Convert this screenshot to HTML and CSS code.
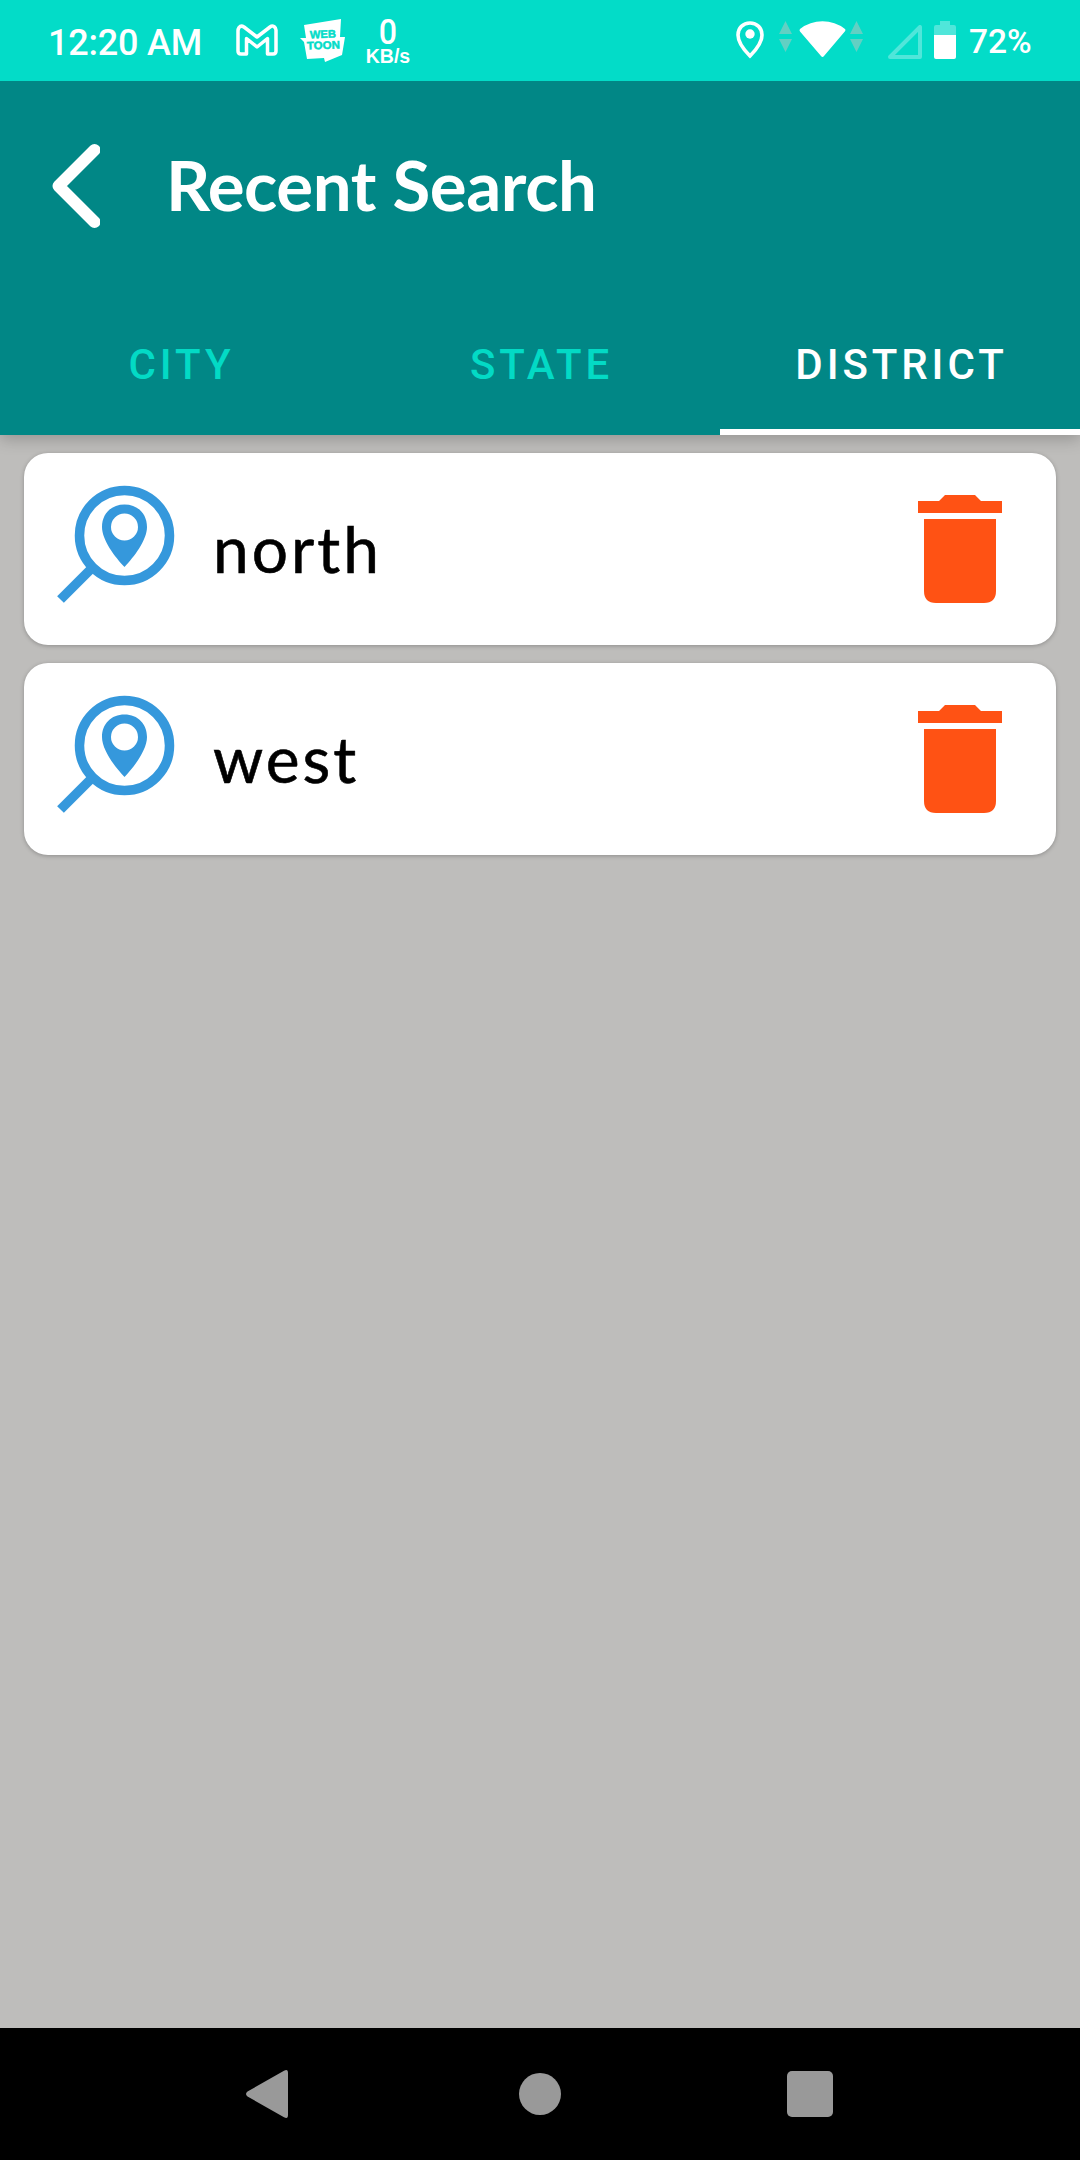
FILE: index.html
```html
<!DOCTYPE html>
<html lang="en">
<head>
<meta charset="utf-8">
<title>Recent Search</title>
<link rel="stylesheet" href="styles.css">
</head>
<body>
<div class="screen">
  <div class="status">
    <span class="time">12:20 AM</span>
    <svg class="mail" width="42" height="32" viewBox="0 0 42 32"><path d="M2 7v20q0 3 3 3h5.500V14.500L21 23l10.500-8.500V30H37q3 0 3-3V6q0-2-2-3.500-2-1-4 .5L21 13 8 3Q5 1 3 3.500 2 5 2 7Z" fill="none" stroke="#fff" stroke-width="3.500" stroke-linejoin="round"/></svg>
    <svg class="toon" width="45" height="43" viewBox="0 0 45 43"><path d="M4 6L41 0l-1 18h5l-3 18-17 7-1-4-17 1-3-17-4-4h6Z" fill="#fff"/><text x="10" y="19" textLength="26" lengthAdjust="spacingAndGlyphs" transform="rotate(-2 22 19)">WEB</text><text x="7" y="30" textLength="33" lengthAdjust="spacingAndGlyphs" transform="rotate(-2 22 30)">TOON</text></svg>
    <div class="speed"><span class="rate">0</span><span class="unit">KB/s</span></div>
    <div class="indicators">
      <svg class="pin" width="28" height="38" viewBox="0 0 28 38"><path d="M14 2C7 2 2 7 2 14c0 7 6 15 12 21 6-6 12-14 12-21C26 7 21 2 14 2Z" fill="none" stroke="#fff" stroke-width="3.600"/><circle cx="14" cy="13" r="4.700" fill="#fff"/></svg>
      <svg class="wifi" width="85" height="38" viewBox="0 0 85 38"><path d="M0 13L6.500 0 13 13ZM0 18h13L6.500 31ZM71 13L77.500 0 84 13ZM71 18h13L77.500 31Z" fill="#62d0c3"/><path d="M21 8Q31 .3 43.500 .3T66 8q1 1 0 2.300L45 35q-1.500 2-3 0L21 10.500Q20 9 21 8Z" fill="#fff"/></svg>
      <svg class="signal" width="34" height="34" viewBox="0 0 34 34"><path d="M32 2v30H2Z" fill="none" stroke="#50e6da" stroke-width="4" stroke-linejoin="round"/></svg>
      <svg class="battery" width="22" height="38" viewBox="0 0 22 38"><path d="M6 0h10v4h4q2 0 2 2v8H0V6q0-2 2-2h4Z" fill="#50e6da"/><path d="M0 14h22v22q0 2-2 2H2q-2 0-2-2Z" fill="#fff"/></svg>
      <span class="percent">72%</span>
    </div>
  </div>
  <header class="header">
    <div class="toolbar">
      <svg class="back" width="50" height="86" viewBox="0 0 50 86"><path d="M44.500 7L8.500 43l36 36" fill="none" stroke="#fff" stroke-width="12" stroke-linecap="round" stroke-linejoin="round"/></svg>
      <h1 class="title">Recent Search</h1>
    </div>
    <nav class="tabs">
      <div class="tab">CITY</div>
      <div class="tab">STATE</div>
      <div class="tab active">DISTRICT</div>
    </nav>
  </header>
  <main class="list">
    <div class="card">
      <svg class="find" width="120" height="120" viewBox="0 0 120 120"><g fill="none" stroke="#3598dc" stroke-width="9.500"><circle cx="68.500" cy="52.500" r="45"/><path d="M4.500 116.500L36 85"/></g><path d="M68.500 21.500C55 21.500 46 31 46 44c0 13 13 30 22.500 40C78 74 91 57 91 44c0-13-9-22.500-22.500-22.500Zm0 9a13.500 13.500 0 1 1 0 27 13.500 13.500 0 0 1 0-27Z" fill="#3598dc" fill-rule="evenodd"/></svg>
      <span class="term">north</span>
      <svg class="trash" width="84" height="108" viewBox="0 0 84 108"><path d="M0 6h21l6-6h30l6 6h21v12H0ZM6 24h72v72q0 12-12 12H18Q6 108 6 96Z" fill="#ff5214"/></svg>
    </div>
    <div class="card">
      <svg class="find" width="120" height="120" viewBox="0 0 120 120"><g fill="none" stroke="#3598dc" stroke-width="9.500"><circle cx="68.500" cy="52.500" r="45"/><path d="M4.500 116.500L36 85"/></g><path d="M68.500 21.500C55 21.500 46 31 46 44c0 13 13 30 22.500 40C78 74 91 57 91 44c0-13-9-22.500-22.500-22.500Zm0 9a13.500 13.500 0 1 1 0 27 13.500 13.500 0 0 1 0-27Z" fill="#3598dc" fill-rule="evenodd"/></svg>
      <span class="term">west</span>
      <svg class="trash" width="84" height="108" viewBox="0 0 84 108"><path d="M0 6h21l6-6h30l6 6h21v12H0ZM6 24h72v72q0 12-12 12H18Q6 108 6 96Z" fill="#ff5214"/></svg>
    </div>
  </main>
  <footer class="navbar">
    <svg width="46" height="48" viewBox="0 0 46 48"><path d="M38 .8Q42-1.500 42 3v42q0 4.500-4 2.200L1.500 26.500Q-1.500 24 1.500 21.500Z" fill="#999"/></svg>
    <svg width="46" height="48" viewBox="0 0 46 48"><circle cx="23" cy="24" r="21" fill="#999"/></svg>
    <svg width="46" height="48" viewBox="0 0 46 48"><rect y="1" width="46" height="46" rx="5" fill="#999"/></svg>
  </footer>
</div>
</body>
</html>
```
FILE: styles.css
```css
* { box-sizing: border-box; }
body { margin: 0; background: #bebdbb; font-family: Roboto, sans-serif; }
svg { display: block; flex: none; }
.screen { width: 1080px; height: 2160px; display: flex; flex-direction: column; }

.status { height: 81px; background: #03dcc8; color: #fff; display: flex; align-items: flex-start; padding: 0 48px; font-weight: 500; }
.time { width: 188px; font-size: 36px; line-height: 42px; padding-top: 22px; white-space: nowrap; letter-spacing: -.2px; }
.mail { margin-top: 24px; }
.toon { margin: 19px 0 0 22px; }
.toon text { font: bold 11px "Liberation Sans", sans-serif; fill: #03dcc8; stroke: #03dcc8; stroke-width: .5px; }
.speed { display: flex; flex-direction: column; align-items: center; width: 48px; margin: 16px 0 0 19px; }
.rate { font-size: 35px; line-height: 33px; height: 31px; transform: scaleX(.92); }
.unit { font: bold 19.500px/18px "Liberation Sans", sans-serif; }
.indicators { display: flex; align-items: flex-start; margin-left: auto; padding-top: 21px; }
.wifi { margin-left: 15px; }
.signal { margin: 4px 0 0 24px; }
.battery { margin-left: 12px; }
.percent { width: 63px; margin-left: 13px; font-size: 33.500px; line-height: 42px; white-space: nowrap; }

.header { height: 354px; background: #018786; flex: none; box-shadow: 0 4px 15px rgba(0, 0, 0, .22); clip-path: inset(0 0 -24px); display: flex; flex-direction: column; }
.toolbar { height: 210px; padding: 0 50px; display: flex; align-items: center; }
.title { margin: 0 0 2px 66px; color: #fff; font: bold 69px/84px Lato, cursive; white-space: nowrap; letter-spacing: -.4px; }
.tabs { height: 144px; display: grid; grid-template-columns: repeat(3, 1fr); }
.tab { display: flex; align-items: center; justify-content: center; color: #03dac5; font-weight: 500; font-size: 42px; letter-spacing: 3.900px; padding: 2px 0 0 3px; }
.active { color: #fff; border-bottom: 6px solid #fff; padding-top: 8px; }

.list { flex: 1; padding: 18px 24px; display: flex; flex-direction: column; gap: 18px; }
.card { height: 192px; background: #fff; border-radius: 24px; box-shadow: 0 1px 4px rgba(0, 0, 0, .25); display: flex; align-items: flex-start; padding: 30px 54px 0 32px; }
.term { margin: 28px 0 0 37px; color: #000; font: 64px/76px Lato, cursive; letter-spacing: 3px; white-space: nowrap; -webkit-text-stroke: .6px #000; }
.trash { margin: 12px 0 0 auto; }

.navbar { height: 132px; background: #000; display: flex; align-items: center; justify-content: space-between; padding: 0 247px 0 246px; }
```
